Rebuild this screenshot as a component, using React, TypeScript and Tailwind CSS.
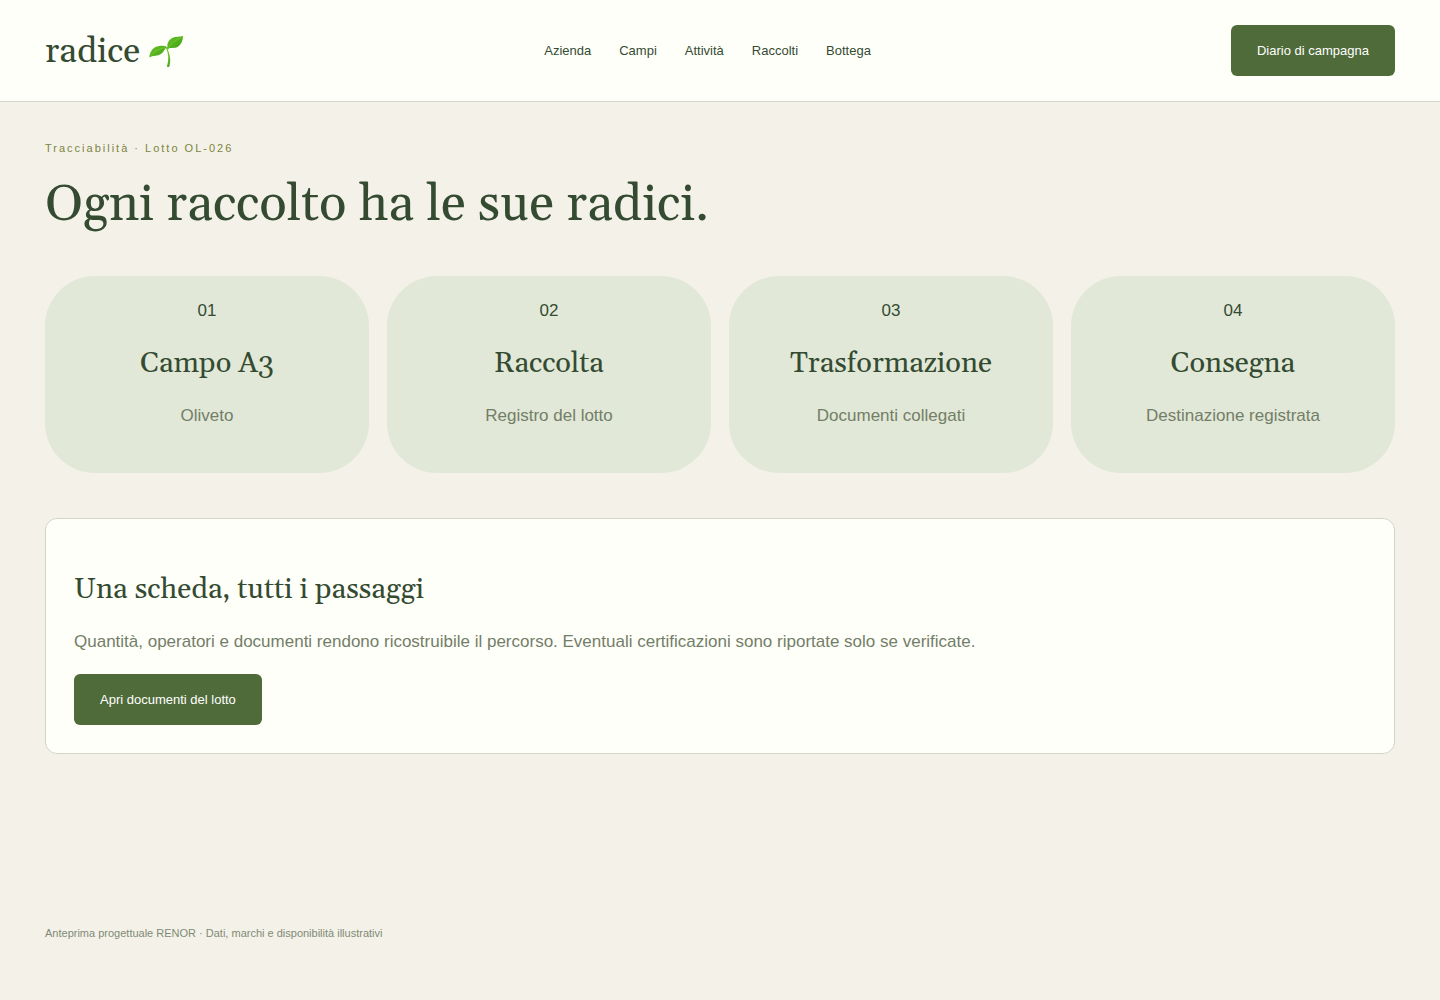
const links = ['Azienda', 'Campi', 'Attività', 'Raccolti', 'Bottega']

const steps = [
  { number: '01', title: 'Campo A3', detail: 'Oliveto' },
  { number: '02', title: 'Raccolta', detail: 'Registro del lotto' },
  { number: '03', title: 'Trasformazione', detail: 'Documenti collegati' },
  { number: '04', title: 'Consegna', detail: 'Destinazione registrata' },
]

export default function App() {
  return (
    <div className="flex min-h-screen flex-col bg-[#f4f1e9] font-['Liberation_Sans',Arial,sans-serif] text-[17px] leading-5 text-[#344b32]">
      <TopBar />
      <main className="flex-1 px-[45px] pt-10">
        <p className="text-[11px] leading-3 tracking-[2px] text-[#7b8540]">
          Tracciabilità · Lotto OL-026
        </p>
        <h1 className="mt-[18px] font-[Georgia,Gelasio,'Liberation_Serif',serif] text-[51px] leading-[66px]">
          Ogni raccolto ha le sue radici.
        </h1>

        <ol className="mt-[38px] grid grid-cols-4 gap-[18px]">
          {steps.map((step) => (
            <StepCard key={step.number} {...step} />
          ))}
        </ol>

        <section className="mt-[45px] rounded-xl border border-[#d2d6c8] bg-[#fffffa] px-7 pt-[53px] pb-7">
          <h2 className="font-[Georgia,Gelasio,'Liberation_Serif',serif] text-[29px] leading-9">
            Una scheda, tutti i passaggi
          </h2>
          <p className="mt-6 text-[#737e68]">
            Quantità, operatori e documenti rendono ricostruibile il percorso. Eventuali certificazioni sono
            riportate solo se verificate.
          </p>
          <div className="mt-[22px] flex">
            <Button>Apri documenti del lotto</Button>
          </div>
        </section>
      </main>

      <footer className="px-[45px] pb-[60px] text-[11px] leading-[14px] text-[#7f8b75]">
        Anteprima progettuale RENOR · Dati, marchi e disponibilità illustrativi
      </footer>
    </div>
  )
}

function TopBar() {
  return (
    <header className="flex items-center justify-between border-b border-[#d2d6c8] bg-[#fffffa] px-[45px] py-[25px]">
      <a href="#" className="flex items-center gap-2 font-[Georgia,Gelasio,'Liberation_Serif',serif] text-[35px] leading-[51px]">
        <span className="pt-1 leading-[47px]">radice</span>
        <Sprout />
      </a>
      <nav className="flex gap-7 text-[13px] leading-[15px]">
        {links.map((link) => (
          <a key={link} href="#">
            {link}
          </a>
        ))}
      </nav>
      <Button>Diario di campagna</Button>
    </header>
  )
}

function Button({ children }: { children: string }) {
  return (
    <button type="button" className="rounded-md bg-[#4f6b3a] px-[26px] py-[18px] text-[13px] leading-[15px] text-white">
      {children}
    </button>
  )
}

function StepCard({ number, title, detail }: { number: string; title: string; detail: string }) {
  return (
    <li className="rounded-[50px] bg-[#e1e8d7] px-6 pt-[25px] pb-[47px] text-center">
      <p>{number}</p>
      <h3 className="mt-[25px] font-[Georgia,Gelasio,'Liberation_Serif',serif] text-[29px] leading-9">{title}</h3>
      <p className="mt-6 text-[#737e68]">{detail}</p>
    </li>
  )
}

function Sprout() {
  return (
    <svg viewBox="0 0 36 36" className="size-9" aria-hidden="true">
      <defs>
        <linearGradient id="leaf" x1="0" y1="0" x2="1" y2="1">
          <stop offset="0" stopColor="#6cc02c" />
          <stop offset="0.5" stopColor="#55b31e" />
          <stop offset="1" stopColor="#3f9c16" />
        </linearGradient>
        <linearGradient id="stem" x1="0" y1="0" x2="0" y2="1">
          <stop offset="0" stopColor="#7fcc35" />
          <stop offset="1" stopColor="#4da522" />
        </linearGradient>
      </defs>
      <path d="M19.300 15.500c2.400 5 3.300 9.500 2.900 13.500-.2 1.700-.4 3-.8 4.400-.6 1-2.200.9-2.400-.2.900-3.500 1.400-6.700 1.200-9.700-.2-2.800-.8-5.200-1.900-7.500z" fill="url(#stem)" />
      <path d="M15 13.500c2-.2 3.300.4 4.700 2.200l.8-1.200" fill="none" stroke="#6cc02c" strokeWidth="1.500" />
      <path d="M1.300 24.500C1.800 19 4.500 14.800 9 13.500c3.800-1.100 7-.8 9.500.9-1.800 1.100-2.500 4.200-5.300 6.400C9.500 23.600 5 22 1.300 24.500z" fill="url(#leaf)" />
      <path d="M19.800 15.500c-1.300-4 .4-8.300 4.200-10.400C27.800 3 31.300 4.200 35 3c0 4.200-1.500 8.200-4.800 10.500-3.500 2.400-7.200.8-10.400 2z" fill="url(#leaf)" />
      <path d="M3 22.300c3.500-4 8-6.600 14-7.800M20.500 14.700c3-4.700 7-7.700 12.500-10" fill="none" stroke="#7fcc3c" strokeWidth="0.700" />
    </svg>
  )
}
